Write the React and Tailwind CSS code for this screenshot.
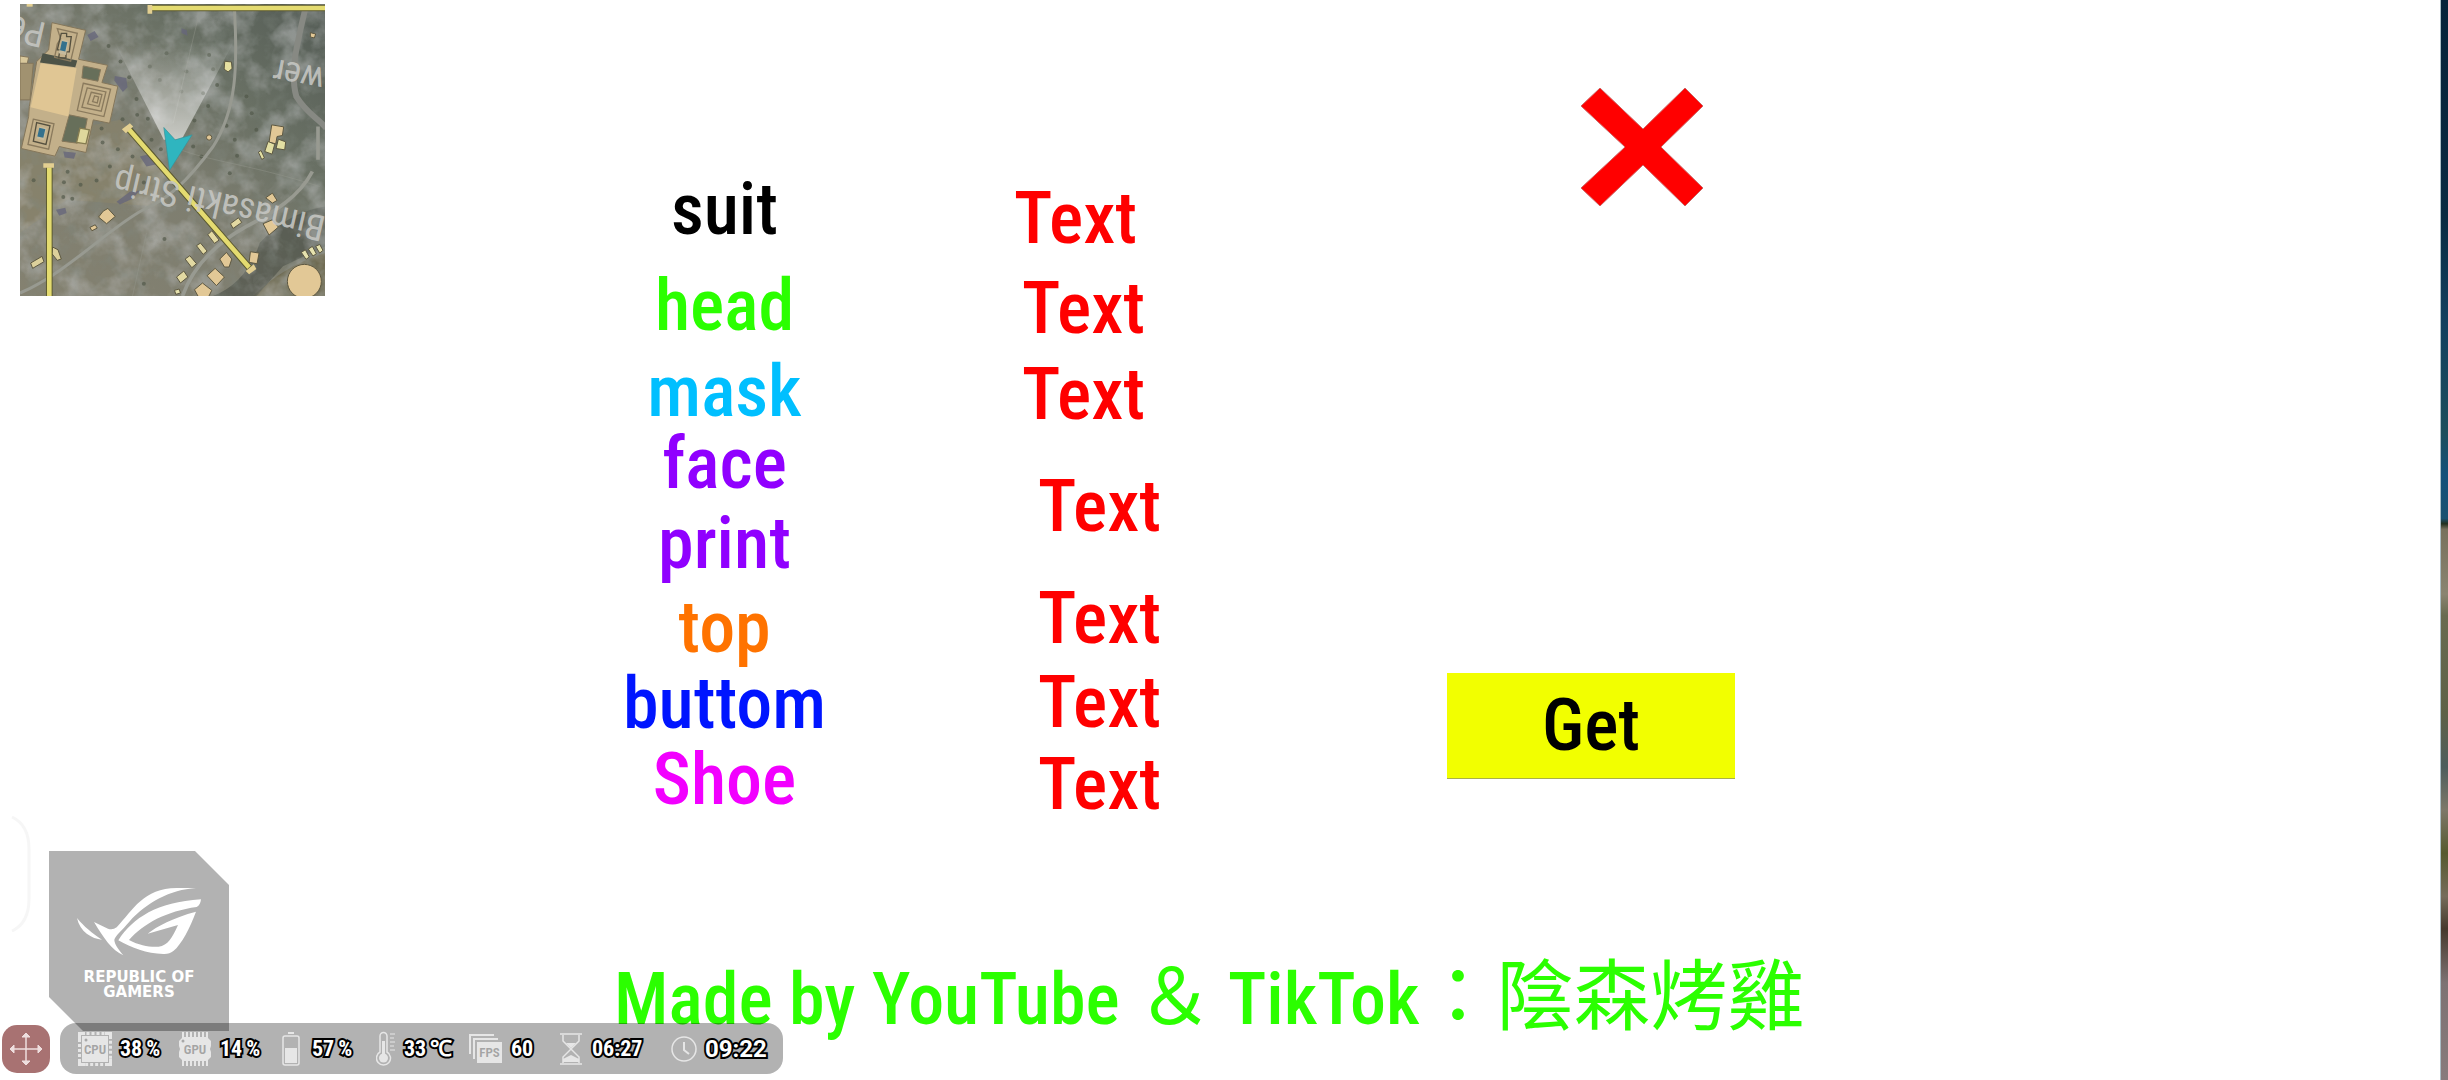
const CONDENSED = "font-['Roboto_Condensed','Noto_Sans_CJK_TC',sans-serif]";

const labels = [
  { id: "suit", lines: ["suit"], style: "text-black" },
  { id: "head", lines: ["head"], style: "mt-6 text-[#2bff00]" },
  { id: "mask", lines: ["mask"], style: "mt-3.5 text-[#00bfff]" },
  { id: "face-print", lines: ["face", "print"], style: "text-[#9000ff]" },
  { id: "top", lines: ["top"], style: "mt-3 text-[#ff7300]" },
  { id: "buttom", lines: ["buttom"], style: "mt-1 text-[#0015ff]" },
  { id: "shoe", lines: ["Shoe"], style: "mt-1 text-[#f200ff]" },
];

const fields = [
  { id: "suit", style: "" },
  { id: "head", style: "mt-4.5 ml-2" },
  { id: "mask", style: "mt-3.5 ml-2" },
  { id: "face-print", style: "mt-10 ml-6" },
  { id: "top", style: "mt-10 ml-6" },
  { id: "buttom", style: "mt-3 ml-6" },
  { id: "shoe", style: "mt-2.5 ml-6" },
];

function Minimap() {
  const trees = [
    [362, 185], [388, 232], [410, 297], [412, 345], [368, 358], [305, 386], [308, 428], [354, 448],
    [330, 500], [290, 542], [242, 555], [203, 516], [217, 597], [192, 547], [101, 541], [444, 357],
    [398, 470], [432, 548], [455, 420], [483, 448], [640, 208], [652, 255], [610, 280], [625, 318],
    [584, 362], [545, 275], [560, 215], [628, 165], [480, 240], [500, 160], [450, 200], [680, 378],
    [705, 420], [712, 468], [756, 340], [770, 390], [740, 290], [690, 520], [580, 440], [605, 470],
    [494, 718], [432, 852], [326, 138], [300, 330], [190, 592],
  ];
  return (
    <svg className="block h-full w-full" viewBox="60 12 916 877" preserveAspectRatio="none" role="img" aria-label="Map">
      <defs>
        <linearGradient id="land" x1="0" y1="1" x2="1" y2="0">
          <stop offset="0" stopColor="#848170" />
          <stop offset="0.45" stopColor="#7e7e70" />
          <stop offset="0.7" stopColor="#697064" />
          <stop offset="1" stopColor="#535b55" />
        </linearGradient>
        <linearGradient id="cone" x1="0" y1="0" x2="0" y2="1">
          <stop offset="0" stopColor="#fff" stopOpacity="0.02" />
          <stop offset="0.4" stopColor="#fff" stopOpacity="0.28" />
          <stop offset="1" stopColor="#fff" stopOpacity="0.6" />
        </linearGradient>
        <filter id="patches" x="0" y="0" width="100%" height="100%">
          <feTurbulence type="fractalNoise" baseFrequency="0.012" numOctaves="4" seed="7" />
          <feColorMatrix values="0 0 0 0 0.56  0 0 0 0 0.57  0 0 0 0 0.58  2.6 0 0 0 -1.1" />
        </filter>
        <filter id="shade" x="0" y="0" width="100%" height="100%">
          <feTurbulence type="fractalNoise" baseFrequency="0.025" numOctaves="4" seed="21" />
          <feColorMatrix values="0 0 0 0 0.22  0 0 0 0 0.25  0 0 0 0 0.22  0 2.6 0 0 -1.15" />
        </filter>
        <clipPath id="mapEdge"><rect x="60" y="12" width="916" height="877" /></clipPath>
      </defs>
      <g clipPath="url(#mapEdge)">
        <rect x="60" y="12" width="916" height="877" fill="url(#land)" />
        <path d="M60 420L360 360 500 500 470 620 200 600 60 700z" fill="#8a8469" opacity="0.6" />
        <path d="M760 889Q850 800 976 760V889z" fill="#6f6b52" />
        <path d="M640 889Q740 850 780 730Q860 640 976 620V740L850 800 770 889z" fill="#474d45" opacity="0.6" />
        <rect x="60" y="12" width="916" height="877" filter="url(#patches)" opacity="0.5" />
        <rect x="60" y="12" width="916" height="877" filter="url(#shade)" opacity="0.35" />
        <g fill="#4f5647" opacity="0.65">
          {trees.map(([x, y]) => <circle key={`${x}-${y}`} cx={x} cy={y} r="6" />)}
        </g>
        <g fill="#66667a" opacity="0.8">
          <path d="M262 105l22-12 12 18-24 12zM345 228l34 6 4 28-14 14-26-34zM420 470l40-10 24 30-44 10zM350 606l40-30 30-4-24 26-36 16zM168 630l28-6 4 16-22 8zM190 455l38 4-6 18-28-4zM545 85l16 6 2 16-18-8z" />
        </g>
        <g fill="none" stroke="#989a91" strokeLinejoin="round">
          <path d="M704 30C714 200 710 330 640 440C560 550 500 600 430 630C320 690 200 820 60 880" strokeWidth="9" />
          <path d="M916 30C890 140 870 220 890 290C920 340 950 350 980 385" strokeWidth="18" stroke="#878983" />
          <path d="M955 380V480M938 515C900 590 820 640 740 680C650 730 580 800 548 889" strokeWidth="11" />
          <path d="M598 40L520 370M520 440C600 480 740 490 960 560M440 700L398 889" strokeWidth="2" opacity="0.6" />
        </g>
        <path d="M345 130L492 420H545L700 130z" fill="url(#cone)" />
        <g fill="#c3b08a" stroke="#85765a" strokeWidth="3">
          <path d="M156 68L257 91 236 178 323 196 306 248 354 259 329 370 280 360 258 458 178 440 165 469 64 446 86 350 88 320 110 185 146 150z" />
          <path d="M250 198L302 209 294 244 246 234zM208 345L262 356 256 388 240 385 232 430 186 424z" fill="#676f5a" />
          <path d="M60 190h40L90 300H60z" fill="#a19270" />
          <path d="M60 168l26 4-4 18H60z" fill="#d9c89b" />
        </g>
        <path d="M128 160L232 182 226 202 120 188z" fill="#4d5347" />
        <g fill="none" stroke="#8a7a5d" strokeWidth="4">
          <path d="M172 86l60 14-20 84-48-12 8-40 10-16z" />
          <path d="M184 100h16v10h14l-6 46h-10v18h-22l4-24h-8z" stroke="#55503f" />
          <path d="M100 358l62 14-16 76-62-14z" />
          <path d="M110 368l40 10-12 56-38-10z" stroke="#55503f" />
          <path d="M250 250l82 18-20 82-80-18zM262 264l56 12-14 58-58-12zM274 277l32 7-9 36-34-8zM284 288l12 3-4 18-14-4z" />
        </g>
        <path d="M186 118l20 5-8 42-22-5zM118 380l22 5-8 36-22-5z" fill="#c6bb9d" />
        <path d="M186 123l16 4-6 28-16-4zM118 384l18 4-6 26-18-4z" fill="#34718d" />
        <path d="M122 190L230 205 205 350 92 322z" fill="#e0c694" />
        <path d="M240 385l28 5-10 42-28-4z" fill="#dfd79c" stroke="#847b50" strokeWidth="4" />
        <g fill="#e2c896" stroke="#5c5741" strokeWidth="3">
          <path d="M816 375l36 6-4 26-16 3-4 22-20-5z" />
          <path d="M805 425l20 8-8 30-22-8zM836 418l22 8-3 24-26-4zM784 452l10 22-8 5-10-22z" fill="#e2dfa3" />
          <path d="M675 184l20 2 2 20-12 10-12-8z" fill="#e5dfa0" />
          <path d="M932 98l16 4-4 12-12-3z" />
          <path d="M310 634l14-8 22 24-26 22-24-20zM270 683l16-8 6 10-16 8z" />
          <path d="M92 790l34-20 6 16-34 20zM158 742l16 8 10 28-12 4-16-20z" fill="#dcd09b" />
          <path d="M692 672l24-18 10 14-26 18zM624 705l12-12 22 28-14 10zM590 738l12-8 20 24-12 10zM556 778l14-10 20 24-14 12zM530 832l22-18 12 18-22 18z" fill="#e2d9a2" />
          <path d="M660 778l20-20 16 20-8 24-14 0zM622 828l24-22 28 26-24 26zM584 870l24-20 28 22-10 20H596zM752 756l26 4-6 32-24-4z" />
          <path d="M798 594l20-14 14 22-14 8zM790 672l28-12 18 22-28 24z" />
          <path d="M905 758l12-8 12 22-10 7zM926 748l12-8 12 22-10 7zM948 740l12-6 10 18-10 8zM524 872l14-4 4 12-14 4z" fill="#e6e2ae" />
          <circle cx="914" cy="845" r="51" />
          <circle cx="628" cy="413" r="8" />
        </g>
        <path d="M449 24H976M148 496V889M383 383L752 808" fill="none" stroke="#5b5930" strokeWidth="20" />
        <path d="M455 24H976M148 502V889M387 388L748 803" fill="none" stroke="#e4db70" strokeWidth="14" />
        <g fill="#c6c7c3" fillOpacity="0.9" className="font-['Roboto_Condensed',sans-serif]" fontSize="108">
          <text transform="translate(982 652) rotate(193)">Bimasakti Strip</text>
          <text transform="translate(978 206) rotate(191)">wer</text>
          <text transform="translate(142 70) rotate(193)">Pe</text>
        </g>
        <g fill="#e3cf91">
          <path d="M443 15h14v26h-14zM130 490h32v14h-32zM366 388l24-18 10 10-22 20zM738 814l24-20 8 14-22 16z" />
          <path d="M80 12h18v8H80z" />
        </g>
        <path d="M492 383L526 420 577 405 509 512z" fill="#2fb5bf" stroke="#3b8f95" strokeWidth="2" />
      </g>
    </svg>
  );
}

function RogEmblem() {
  return (
    <svg className="block w-[126px]" viewBox="228 258 378 208" fill="#fff" aria-hidden="true">
      <path d="M231 351C252 377 276 396 306 416C276 414 239 392 231 351z" />
      <path d="M282 363L324 383Q338 388 350 379C400 326 430 262 530 261H588C510 266 440 304 388 362C366 388 346 404 343 416C343 430 358 448 370 463C336 448 310 410 282 363z" />
      <path d="M355 418C400 350 470 304 603 295C602 306 598 314 590 318C500 330 430 368 387 417C420 434 450 439 476 437C504 433 516 412 534 372L443 398C470 376 520 350 588 332C570 380 545 430 520 450Q508 460 490 459C440 458 395 440 355 418z" />
    </svg>
  );
}

const iconText = { fontSize: 13, fontWeight: 600, textAnchor: "middle" };

function CpuIcon() {
  return (
    <svg className="w-[34px]" viewBox="0 0 34 34" aria-hidden="true">
      <rect x="1.500" y="1.500" width="31" height="31" rx="2" fill="none" stroke="#e6e6e6" strokeWidth="3" strokeDasharray="3 2" />
      <path d="M1.500 7V1.500H7M27 1.500h5.500V7M32.500 27v5.500H27M7 32.500H1.500V27" fill="none" stroke="#e6e6e6" strokeWidth="3" />
      <rect x="4" y="4" width="26" height="26" fill="#e6e6e6" />
      <circle cx="8" cy="8" r="1.500" fill="#a8a8a8" />
      <text x="17" y="22" fill="#a4a4a4" {...iconText}>CPU</text>
    </svg>
  );
}

function GpuIcon() {
  const pins = [5, 9, 13, 17, 21, 25, 29];
  return (
    <svg className="w-[34px]" viewBox="0 0 34 34" aria-hidden="true">
      <path d={pins.map((x) => `M${x} 0V34`).join("")} stroke="#e6e6e6" strokeWidth="2" />
      <path d="M5 5H29L33 9V14L32 17 33 20V25L29 29H5L1 25V20L2 17 1 14V9z" fill="#e6e6e6" />
      <circle cx="5" cy="9" r="1.500" fill="#a8a8a8" />
      <text x="17" y="22" fill="#a4a4a4" {...iconText}>GPU</text>
    </svg>
  );
}

function BatteryIcon() {
  return (
    <svg className="w-[18px]" viewBox="0 0 18 34" aria-hidden="true">
      <rect x="6" y="0" width="6" height="2" fill="#e6e6e6" />
      <rect x="1" y="4" width="16" height="29" rx="2" fill="none" stroke="#e6e6e6" strokeWidth="1.500" />
      <rect x="3" y="16" width="12" height="15" fill="#e6e6e6" />
    </svg>
  );
}

function ThermometerIcon() {
  return (
    <svg className="w-5" viewBox="0 0 20 36" aria-hidden="true">
      <path d="M4 21V5a3.500 3.500 0 0 1 7 0V21a7 7 0 1 1-7 0z" fill="none" stroke="#e6e6e6" strokeWidth="1.500" />
      <path d="M7.500 10V27" stroke="#e6e6e6" strokeWidth="3" />
      <circle cx="7.500" cy="27" r="4.500" fill="#e6e6e6" />
      <path d="M14 3h5M14 7h4M14 11h5M14 15h4M14 19h5" stroke="#e6e6e6" />
    </svg>
  );
}

function FpsIcon() {
  return (
    <svg className="w-[34px]" viewBox="0 0 34 30" aria-hidden="true">
      <path d="M1 20V1H25M5 25V5H29" fill="none" stroke="#e6e6e6" strokeWidth="2" />
      <rect x="8" y="8" width="25" height="21" fill="#e6e6e6" />
      <text x="20.500" y="23" fill="#a4a4a4" {...iconText}>FPS</text>
    </svg>
  );
}

function HourglassIcon() {
  return (
    <svg className="w-[22px]" viewBox="0 0 22 32" aria-hidden="true">
      <path d="M0 1H22M0 31H22" stroke="#e6e6e6" strokeWidth="1.500" />
      <path d="M3 2V8L11 16 19 8V2M3 30V24L11 16 19 24V30" fill="none" stroke="#e6e6e6" strokeWidth="1.500" />
      <path d="M6 10h10L11 15zM3 29V26L11 22 19 26V29z" fill="#e6e6e6" />
    </svg>
  );
}

function ClockIcon() {
  return (
    <svg className="w-[26px]" viewBox="0 0 26 26" fill="none" stroke="#e6e6e6" aria-hidden="true">
      <circle cx="13" cy="13" r="12" strokeWidth="1.500" />
      <path d="M13 6V14L18 18" strokeWidth="2" />
    </svg>
  );
}

const OUTLINED = "font-bold text-white [-webkit-text-stroke:4px_black] [paint-order:stroke_fill]";

const readings = [
  { name: "CPU", Icon: CpuIcon, value: "38", unit: "%", width: "w-[100px]" },
  { name: "GPU", Icon: GpuIcon, value: "14", unit: "%", width: "w-[104px]" },
  { name: "Battery", Icon: BatteryIcon, value: "57", unit: "%", width: "w-[94px]", gap: "gap-3" },
  { name: "Temperature", Icon: ThermometerIcon, value: "33", unit: "℃", width: "w-[93px]" },
  { name: "FPS", Icon: FpsIcon, value: "60", width: "w-[91px]" },
  { name: "Elapsed", Icon: HourglassIcon, value: "06:27", width: "w-[111px]", gap: "gap-2.5" },
];

function StatusBar() {
  return (
    <div className="absolute bottom-1.5 left-0.5 flex items-center gap-2.5">
      <button aria-label="Move" className="flex size-12 items-center justify-center rounded-[15px] bg-[#a87272]">
        <svg className="size-[34px]" viewBox="0 0 34 34" fill="#eedede" stroke="#eedede" aria-hidden="true">
          <path d="M17 4V30M4 17H30" strokeWidth="1.500" />
          <path d="M17 1l4 4h-8zM17 33l4-4h-8zM1 17l4-4v8zM33 17l-4-4v8z" />
        </svg>
      </button>
      <div className="flex h-[51px] items-center rounded-2xl bg-black/30 pr-4 pl-[18px] font-['Roboto_Condensed',sans-serif] text-[22px] leading-6">
        {readings.map(({ name, Icon, value, unit, width, gap = "gap-2" }) => (
          <div key={name} className={`flex items-center ${gap} ${width}`}>
            <Icon />
            <span className={`flex gap-1 ${OUTLINED}`}>
              <span>{value}</span>
              {unit && <span>{unit}</span>}
            </span>
          </div>
        ))}
        <div className="flex items-center gap-2">
          <ClockIcon />
          <span className={`font-['Roboto',sans-serif] text-2xl leading-6 ${OUTLINED}`}>09:22</span>
        </div>
      </div>
    </div>
  );
}

export default function App() {
  return (
    <div className="relative flex min-h-screen overflow-hidden bg-white">
      <div className="flex grow flex-col">
        <main className={`flex grow items-start pl-[25%] text-[72px] leading-[72px] font-medium ${CONDENSED}`}>
          <div className="mt-[174px] flex w-[229px] flex-col items-center">
            {labels.map(({ id, lines, style }) => (
              <label key={id} htmlFor={id} className={`flex flex-col items-center gap-2 ${style}`}>
                {lines.map((line) => <span key={line}>{line}</span>)}
              </label>
            ))}
          </div>
          <div className="mt-[182px] ml-[175px] flex flex-col items-start text-[#ff0000]">
            {fields.map(({ id, style }) => (
              <input key={id} id={id} defaultValue="Text" className={`h-[72px] w-32 bg-transparent outline-none ${style}`} />
            ))}
          </div>
          <div className="mt-[88px] ml-[281px] flex flex-col">
            <button aria-label="Close" className="mr-8 self-end">
              <svg className="block w-[122px]" viewBox="0 0 122 118" aria-hidden="true">
                <path d="M19 0L0 18 44 59 0 100 19 118 62 77 104 118 122 100 80 59 122 18 104 0 62 41z" fill="#ff0000" stroke="#c66" strokeWidth="1" />
              </svg>
            </button>
            <button className="mt-[467px] h-[106px] w-72 border-b border-[#a9b04a] bg-[#f2ff00] text-black">Get</button>
          </div>
        </main>
        <footer className={`mb-10 ml-1 pl-[25%] text-[72px] leading-[80px] font-medium whitespace-nowrap text-[#2bff00] ${CONDENSED}`}>
          Made by YouTube <span className="text-[77px] font-normal">{"\uFF06"}</span> TikTok
          <span className="text-[77px] font-normal">{"\uFF1A"}陰森烤雞</span>
        </footer>
      </div>
      <div className="w-2 shrink-0 border-l border-[#a9bcc4] bg-[linear-gradient(#06233a_0%,#0a2b42_20%,#12405f_30%,#1d4e5c_40%,#14507a_44%,#1b5170_48%,#22301f_48.5%,#77715d_49%,#8a8471_55%,#696b50_57%,#5e6148_66%,#4d5d5c_71%,#7d7869_75%,#56592f_79%,#766c5b_83%,#45392d_86%,#7d7273_91%,#887b7c_100%)]" />

      <div className="absolute top-1 left-5 h-[292px] w-[305px]">
        <Minimap />
      </div>
      <svg className="absolute bottom-[147px] left-2.5 w-[22px]" viewBox="0 0 22 118" fill="none" stroke="#f6f6f6" strokeWidth="3" aria-hidden="true">
        <path d="M2 2Q19 10 19 34V84Q19 108 2 116" />
      </svg>
      <div className="absolute bottom-[49px] left-[49px] flex size-[180px] flex-col items-center bg-black/30 pt-9 text-center [clip-path:polygon(0_0,146px_0,100%_34px,100%_100%,34px_100%,0_146px)]">
        <RogEmblem />
        <p className="mt-3.5 font-['DejaVu_Sans',sans-serif] text-[15px] leading-[15px] font-bold text-white">
          REPUBLIC OF
          <br />
          GAMERS
        </p>
      </div>
      <StatusBar />
    </div>
  );
}
